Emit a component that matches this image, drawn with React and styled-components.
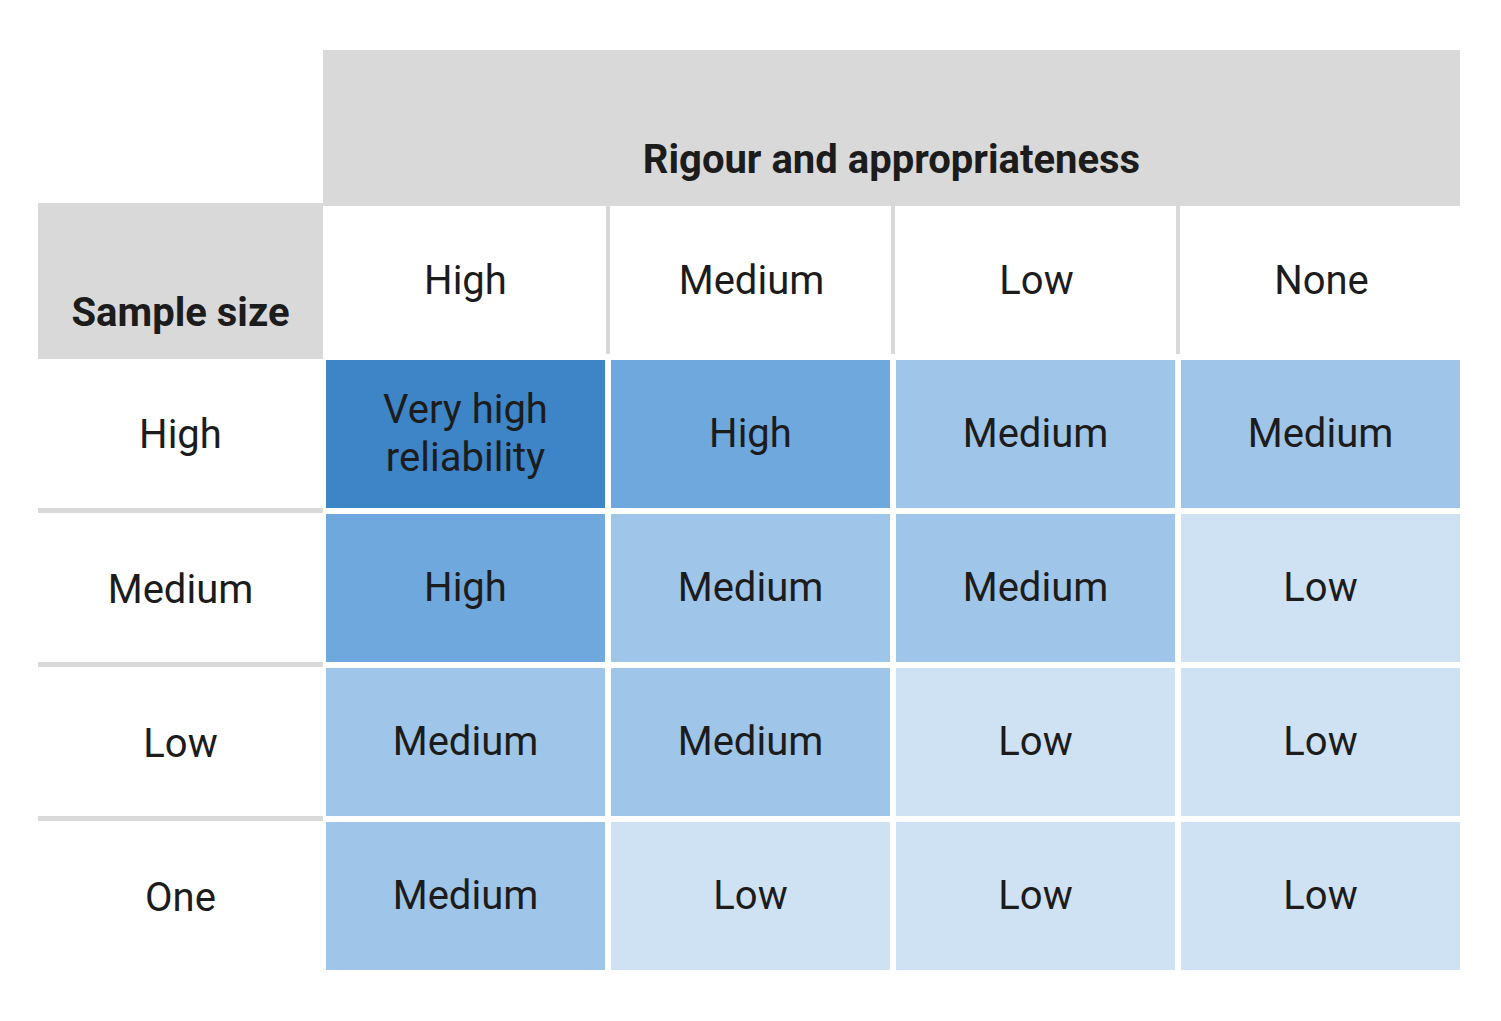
import React from 'react';
import styled, {createGlobalStyle, css} from 'styled-components';

const GlobalStyle = createGlobalStyle`
  html, body {
    margin: 0;
    padding: 0;
    background: #ffffff;
  }
  body {
    font-family: Roboto, "Liberation Sans", sans-serif;
    color: #1c1c1c;
  }
`

const colors = {
    vhigh: '#3d85c6',
    high: '#6fa8dc',
    medium: '#9fc5e8',
    low: '#cfe2f3',
};

const gray = '#d9d9d9';

const Page = styled.div`
  width: 1501px;
  height: 1021px;
  padding: 50px 0 0 38px;
  box-sizing: border-box;
`

const Table = styled.div`
  display: grid;
  grid-template-columns: 285px repeat(4, 285px);
  grid-template-rows: 156px 151px repeat(4, 154px);
  width: 1425px;
`

const Heading = styled.div`
  background: ${gray};
  display: flex;
  align-items: flex-end;
  justify-content: center;
  padding-bottom: 23px;
  font-size: 40px;
  font-weight: 700;
`

const Title = styled(Heading)`
  grid-column: 2 / span 4;
  margin-right: 3px;
`

const SampleSize = styled(Heading)`
  grid-column: 1;
  margin: -3px 0 -2px 0;
`

const ColHead = styled.div`
  display: flex;
  align-items: center;
  justify-content: center;
  margin-bottom: 3px;
  font-size: 40px;
  ${({$divider}) => $divider && css`
    border-left: 4px solid ${gray};
    margin-left: -2px;
  `}
`

const RowLabel = styled.div`
  display: flex;
  align-items: center;
  justify-content: center;
  font-size: 40px;
  ${({$divider}) => $divider && css`
    border-top: 5px solid ${gray};
    margin-top: -3px;
  `}
`

const Cell = styled.div`
  margin: 3px;
  background: ${({$level}) => colors[$level]};
  display: flex;
  flex-direction: column;
  align-items: center;
  justify-content: center;
  text-align: center;
  font-size: 40px;
  line-height: 48px;
`

const columns = ['High', 'Medium', 'Low', 'None'];

const rows = [
    {label: 'High', cells: [['vhigh', 'Very high\nreliability'], ['high', 'High'], ['medium', 'Medium'], ['medium', 'Medium']]},
    {label: 'Medium', cells: [['high', 'High'], ['medium', 'Medium'], ['medium', 'Medium'], ['low', 'Low']]},
    {label: 'Low', cells: [['medium', 'Medium'], ['medium', 'Medium'], ['low', 'Low'], ['low', 'Low']]},
    {label: 'One', cells: [['medium', 'Medium'], ['low', 'Low'], ['low', 'Low'], ['low', 'Low']]},
];

export default () => {
    return <>
        <GlobalStyle/>
        <Page>
            <Table>
                <div/>
                <Title>Rigour and appropriateness</Title>
                <SampleSize>Sample size</SampleSize>
                {columns.map((c, i) => <ColHead key={c} $divider={i > 0}>{c}</ColHead>)}
                {rows.map((row, r) => <React.Fragment key={row.label}>
                    <RowLabel $divider={r > 0}>{row.label}</RowLabel>
                    {row.cells.map(([level, text], i) =>
                        <Cell key={i} $level={level}>
                            {text.split('\n').map((line, j) => <div key={j}>{line}</div>)}
                        </Cell>
                    )}
                </React.Fragment>)}
            </Table>
        </Page>
    </>
}
